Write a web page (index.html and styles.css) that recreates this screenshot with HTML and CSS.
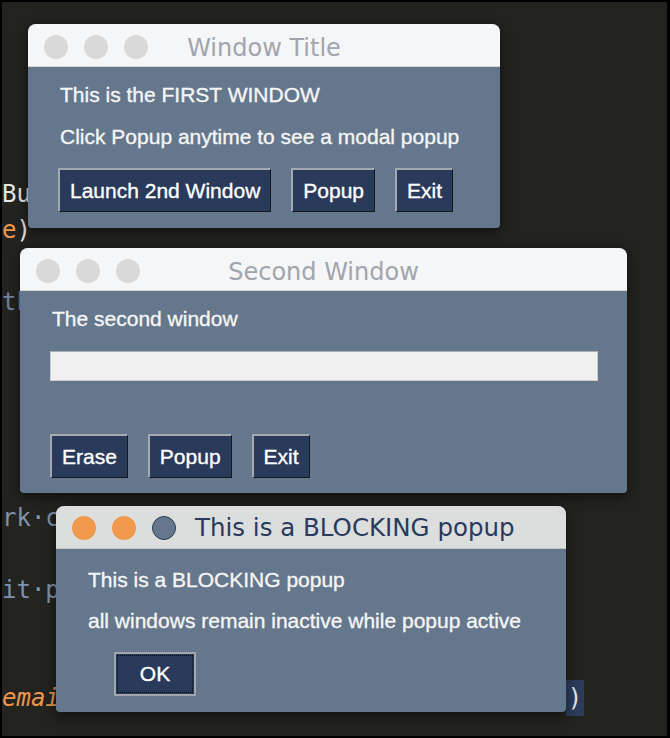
FILE: index.html
```html
<!DOCTYPE html>
<html>
<head>
<meta charset="utf-8">
<link rel="stylesheet" href="styles.css">
</head>
<body>
<div class="screen">
  <div class="editor">
    <div class="line"><span class="c-white">Bu</span></div>
    <div class="line"><span class="c-orange">e</span><span class="c-white">)</span></div>
    <div class="line"></div>
    <div class="line"><span class="c-blue">th</span></div>
    <div class="line"></div>
    <div class="line"></div>
    <div class="line"></div>
    <div class="line"></div>
    <div class="line"></div>
    <div class="line"><span class="c-gray">rk·c</span></div>
    <div class="line"></div>
    <div class="line"><span class="c-gray">it·p</span></div>
    <div class="line"></div>
    <div class="line"></div>
    <div class="line"><span class="c-orange c-italic">emai</span><span class="bracket">)</span></div>
  </div>

  <div class="window win1">
    <div class="titlebar">
      <span class="light"></span><span class="light"></span><span class="light"></span>
      <span class="title">Window Title</span>
    </div>
    <div class="body">
      <div class="label">This is the FIRST WINDOW</div>
      <div class="label gap18">Click Popup anytime to see a modal popup</div>
      <div class="buttons gap19">
        <span class="btn">Launch 2nd Window</span>
        <span class="btn">Popup</span>
        <span class="btn">Exit</span>
      </div>
    </div>
  </div>

  <div class="window win2">
    <div class="titlebar">
      <span class="light"></span><span class="light"></span><span class="light"></span>
      <span class="title">Second Window</span>
    </div>
    <div class="body body2">
      <div class="label">The second window</div>
      <div class="input"></div>
      <div class="buttons gap53">
        <span class="btn">Erase</span>
        <span class="btn">Popup</span>
        <span class="btn">Exit</span>
      </div>
    </div>
  </div>

  <div class="window popup">
    <div class="titlebar titlebar-popup">
      <span class="light light-orange"></span><span class="light light-orange"></span><span class="light light-blue"></span>
      <span class="ptitle">This is a BLOCKING popup</span>
    </div>
    <div class="body body3">
      <div class="label">This is a BLOCKING popup</div>
      <div class="label gap17">all windows remain inactive while popup active</div>
      <div class="buttons gap19 ok-row">
        <span class="btn btn-ok">OK</span>
      </div>
    </div>
  </div>
</div>
</body>
</html>
```

FILE: styles.css
```css
html, body {
  margin: 0;
  padding: 0;
  background: #000;
}

.screen {
  position: relative;
  margin: 2px 3px 2px 2px;
  width: 665px;
  height: 734px;
  background: #232320;
  overflow: hidden;
}

.editor {
  padding-top: 174px;
  font-family: "DejaVu Sans Mono", monospace;
  font-size: 24px;
  line-height: 36px;
}

.line {
  height: 36px;
  display: flex;
  white-space: pre;
}

.c-white { color: #e6e6e6; }
.c-orange { color: #f0974b; }
.c-blue { color: #6d84a6; }
.c-gray { color: #7f93ae; }
.c-italic { font-style: italic; }

.bracket {
  margin-left: 506px;
  color: #e8e8e8;
  background: #2c3d5c;
  padding: 0 2px;
}

/* windows on the desktop */
.window {
  position: absolute;
  background: #64778c;
  border-radius: 8px 8px 4px 4px;
  overflow: hidden;
  box-shadow: 0 4px 14px rgba(0, 0, 0, 0.55);
  font-family: "Liberation Sans", Arial, sans-serif;
}

.win1 { left: 26px; top: 22px; width: 472px; }
.win2 { left: 18px; top: 246px; width: 607px; }
.popup { left: 54px; top: 504px; width: 510px; }

.titlebar {
  position: relative;
  box-sizing: border-box;
  height: 43px;
  padding-top: 3px;
  background: #f5f6f8;
  border-bottom: 1px solid #d3d6da;
  display: flex;
  align-items: center;
  gap: 16px;
  padding-left: 16px;
}

.titlebar-popup {
  padding-top: 1px;
  background: #dcdedd;
  border-bottom: 1px solid #c4c7c9;
}

.light {
  width: 24px;
  height: 24px;
  border-radius: 50%;
  background: #d9d9d9;
  flex: none;
}

.light-orange { background: #f0994c; }

.light-blue {
  box-sizing: border-box;
  background: #64778c;
  border: 1.5px solid #2b3b5a;
}

.title {
  position: absolute;
  left: 0;
  right: 0;
  top: 3px;
  text-align: center;
  font-family: "DejaVu Sans", sans-serif;
  font-size: 24px;
  color: #a0a5ad;
  line-height: 43px;
}

.ptitle {
  margin-left: 3px;
  font-family: "DejaVu Sans", sans-serif;
  font-size: 24.5px;
  color: #293a5d;
  white-space: nowrap;
}

.body {
  padding: 16px 30px 16px 30px;
  display: flex;
  flex-direction: column;
  align-items: flex-start;
}

.body2 { padding: 16px 29px 15px 30px; }
.body3 { padding: 19px 30px 16px 30px; }

.label {
  font-size: 21px;
  line-height: 24px;
  color: #f5f5f5;
  padding-left: 2px;
  white-space: nowrap;
  -webkit-text-stroke: 0.35px #f5f5f5;
}

.gap17 { margin-top: 17px; }
.gap18 { margin-top: 18px; }
.gap19 { margin-top: 19px; }
.gap53 { margin-top: 53px; }

.input {
  margin-top: 20px;
  align-self: stretch;
  box-sizing: border-box;
  height: 30px;
  background: #f0f0f0;
  border: 1px solid #c9cbcd;
  border-top-color: #a9abae;
}

.buttons {
  display: flex;
  gap: 20px;
}

.ok-row { padding-left: 28px; }

.btn {
  box-sizing: border-box;
  height: 44px;
  display: inline-flex;
  align-items: center;
  padding: 0 10px;
  background: #293a5a;
  color: #ffffff;
  font-size: 21px;
  -webkit-text-stroke: 0.35px #ffffff;
  border-top: 2px solid #a2a9b1;
  border-left: 2px solid #a2a9b1;
  border-right: 1px solid #15191f;
  border-bottom: 1px solid #15191f;
  white-space: nowrap;
}

.btn-ok {
  width: 82px;
  justify-content: center;
  border: 2px solid #a2a6ab;
  outline: 1.5px dotted #0b0d12;
  outline-offset: -4px;
}
```
